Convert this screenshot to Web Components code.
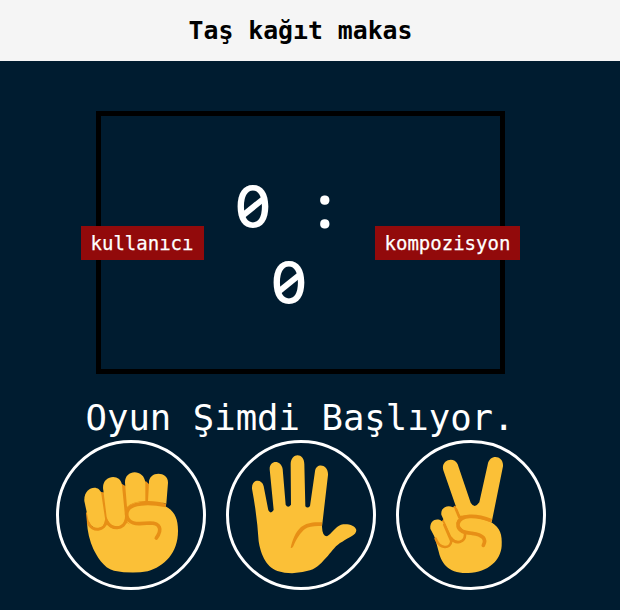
<!DOCTYPE html>
<html lang="tr">
<head>
<meta charset="utf-8">
<title>Taş kağıt makas</title>
<style>
html,body{margin:0;height:610px;overflow:hidden;background:#001c30}
</style>
</head>
<body>
<rps-game></rps-game>
<script>
const define = (name, html) => customElements.define(name, class extends HTMLElement {
  constructor() {
    super();
    this.attachShadow({mode: 'open'}).innerHTML = html;
  }
});

define('game-header', `<style>
:host{display:flex;box-sizing:border-box;width:620px;height:61px;justify-content:center;align-items:center;background:#f5f5f5;color:#000}
h1{margin:0;padding-right:19px;font:bold 24.8px/30px "DejaVu Sans Mono","Liberation Mono",monospace;white-space:nowrap}
</style><h1><slot></slot></h1>`);

define('player-tag', `<style>
:host{display:block;box-sizing:border-box;height:34px;padding:0 9.5px;background:#920a0b;font-size:19px;line-height:34px;white-space:nowrap;-webkit-text-stroke:.25px #fff}
</style><slot></slot>`);

define('score-digit', `<style>
:host{display:inline-block;width:35.75px;font-family:Inter,sans-serif;font-weight:500;font-size:59px;line-height:76px}
span{display:flex;justify-content:center;position:relative;transform:scaleX(.97)}
span::after{content:"";position:absolute;left:50%;top:50%;width:25px;height:5.5px;background:#fff;transform:translate(-50%,-50%) rotate(-38deg)}
</style><span><slot></slot></span>`);

define('score-board', `<style>
:host{display:flex;box-sizing:border-box;width:409px;height:263px;border:5px solid #000;align-items:center;justify-content:space-between}
.left{margin-left:-20px;width:123px;box-sizing:border-box}
.right{margin-right:-20px;width:145px;box-sizing:border-box}
.score{display:flex;flex-direction:column;align-items:center;font-size:59px;line-height:76px;padding:4px 1px 0 0}
.line{display:flex;height:76px}
.gap{width:35.75px}
.colon{width:35.75px;text-align:center;font-family:"Noto Sans",sans-serif;font-weight:600;font-size:60px;line-height:72px}
</style>
<player-tag class="left">kullanıcı</player-tag>
<div class="score"><div class="line"><score-digit>0</score-digit><span class="gap"></span><span class="colon">:</span></div><div class="line"><score-digit>0</score-digit></div></div>
<player-tag class="right">kompozisyon</player-tag>`);

define('game-message', `<style>
:host{display:block;font-size:35.63px;line-height:46px;white-space:nowrap}
</style><slot></slot>`);

define('hand-choice', `<style>
:host{display:block;box-sizing:border-box;width:150px;height:150px;border:3px solid #fff;border-radius:50%}
</style><slot></slot>`);

const hand = (name, art) => define(name, `<style>
:host{display:block}svg{display:block}
.skin{fill:#fbc037}.crease{fill:none;stroke:#e78f16;stroke-width:11;stroke-linecap:round;stroke-linejoin:round}
</style><svg width="144" height="144" viewBox="27 24 432 432">${art}</svg>`);

hand('hand-rock', `
<path fill="#e78f16" d="M150 170L168 173L215 146L230 155L288 139L300 150L347 214L240 285L150 290L111 263L108 235Z"/>
<path class="skin" d="M111 263C125 290 158 291 170 266C185 286 214 287 229 262C241 274 260 270 285 268C310 265 325 269 330 285Q331 298 322 313Q310 315 314 304C322 286 315 275 300 274C270 278 247 277 232 262L225 235Q229 208 265 201L346 214C373 227 384 250 384 286C385 354 343 395 293 409Q244 417 192 407C160 400 139 360 130 342Q113 303 111 263Z"/>
<path class="skin" d="M103 198C100 155 149 146 154 177L165 250C168 288 123 289 115 254Z"/>
<path class="skin" d="M160 166C151 120 213 112 216 151L225 243C225 285 179 282 170 246Z"/>
<path class="skin" d="M225 143C224 101 283 101 286 143L286 198Q246 200 231 216Z"/>
<path class="skin" d="M297 145C294 107 355 107 354 143L349 206Q325 198 294 198Z"/>
<path class="crease" style="stroke-width:9" d="M115 264C126 291 166 289 169 257C181 287 224 286 230 252"/>
<path class="crease" style="stroke-linecap:butt" d="M348 211C297 202 239 202 231 230"/>
<path class="crease" d="M231 230C226 252 241 267 269 266L300 264C330 264 338 283 319 309"/>`);

hand('hand-paper', `
<path class="skin" d="M96 161C94 132 126 130 131 154L145 226Q152 239 161 225L149 103C148 75 183 73 188 102L197 209Q204 221 213 209L212 87C213 52 253 52 253 88L256 214Q263 222 270 213L285 109C288 82 326 87 324 120L306 275Q307 304 321 304C333 297 347 275 363 269C381 265 406 270 409 285C409 301 388 306 367 320C347 330 337 347 324 362C304 383 295 397 270 406Q218 422 172 408C135 395 121 351 116 319Q111 240 96 161Z"/>
<path fill="#e78f16" d="M306 262C277 260 259 264 243 276C225 293 217 316 212 338Q216 341 220 334C229 310 243 292 255 282C268 273 285 272 306 273Z"/>`);

hand('hand-scissors', `
<path fill="#e78f16" d="M153 262L193 212L303 250L300 286L200 330L133 301Z"/>
<path class="skin" d="M160 106C151 76 191 62 203 88L242 203Q254 223 268 202L293 89C299 54 342 61 339 94L305 262Q258 239 210 242L199 218Z"/>
<path class="skin" d="M133 302C154 342 178 340 186 319C211 329 224 316 228 294L206 270L211 251L246 243L304 262C331 279 337 300 335 333C332 376 295 412 235 414C174 417 153 380 147 353Z"/>
<path class="skin" d="M121 281C118 248 156 245 163 271L184 315C185 341 148 347 137 312Z"/>
<path class="skin" d="M154 239C151 211 184 207 195 222L211 250Q198 268 212 288L227 297C224 326 197 322 184 305Z"/>
<path class="crease" style="stroke-width:8" d="M137 311C149 344 182 342 184 318L163 269M183 309C198 332 227 320 225 296M198 223L208 247"/>
<path class="crease" style="stroke-linecap:butt" d="M305 257C257 239 211 238 204 266"/>
<path class="crease" d="M204 266C202 291 228 293 246 295C280 299 290 313 280 331"/>`);

define('rps-game', `<style>
:host{display:flex;flex-direction:column;align-items:center;width:620px;height:610px;background:#001c30;color:#fff;font-family:"DejaVu Sans Mono","Liberation Mono",monospace}
score-board{margin:50px 19px 0 0}
game-message{margin:21px 20px -1px 0}
.hands{display:flex;gap:20px;margin-right:18px}
</style>
<game-header>Taş kağıt makas</game-header>
<score-board></score-board>
<game-message>Oyun Şimdi Başlıyor.</game-message>
<div class="hands">
<hand-choice><hand-rock></hand-rock></hand-choice>
<hand-choice><hand-paper></hand-paper></hand-choice>
<hand-choice><hand-scissors></hand-scissors></hand-choice>
</div>`);
</script>
</body>
</html>
